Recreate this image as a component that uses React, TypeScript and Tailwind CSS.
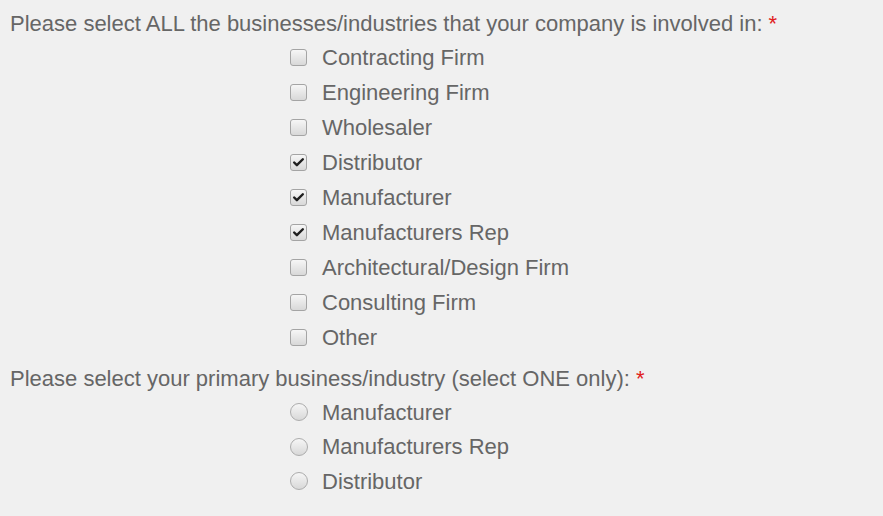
import { Check } from "lucide-react";

const BUSINESSES = [
  { label: "Contracting Firm", checked: false },
  { label: "Engineering Firm", checked: false },
  { label: "Wholesaler", checked: false },
  { label: "Distributor", checked: true },
  { label: "Manufacturer", checked: true },
  { label: "Manufacturers Rep", checked: true },
  { label: "Architectural/Design Firm", checked: false },
  { label: "Consulting Firm", checked: false },
  { label: "Other", checked: false },
];

const PRIMARY = ["Manufacturer", "Manufacturers Rep", "Distributor"];

function Box({ checked }: { checked: boolean }) {
  return (
    <span className="w-[17px] h-[17px] shrink-0 rounded-[3px] border border-[#a4a4a4] bg-gradient-to-b from-[#f6f6f6] to-[#d8d8d8] flex items-center justify-center">
      {checked && <Check size={13} strokeWidth={4.5} className="text-[#1e1e1e]" />}
    </span>
  );
}

function Radio() {
  return (
    <span className="w-[18px] h-[18px] shrink-0 rounded-full border border-[#acacac] bg-gradient-to-b from-[#f6f6f6] to-[#d8d8d8]" />
  );
}

export default function App() {
  return (
    <div className="w-[883px] h-[516px] bg-[#f0f0f0] text-[#666] text-[22px] font-['Liberation_Sans',Arial,sans-serif] px-[10px] pt-[10px]">
      <div className="leading-[28px]">
        Please select ALL the businesses/industries that your company is involved in: <span className="text-[#e02020]">*</span>
      </div>
      <div className="pl-[280px] mt-[2px]">
        {BUSINESSES.map(item => (
          <div key={item.label} className="flex items-center gap-[15px] h-[35px]">
            <Box checked={item.checked} />
            <span>{item.label}</span>
          </div>
        ))}
      </div>
      <div className="leading-[28px] mt-[10px]">
        Please select your primary business/industry (select ONE only): <span className="text-[#e02020]">*</span>
      </div>
      <div className="pl-[280px] mt-[2px]">
        {PRIMARY.map(label => (
          <div key={label} className="flex items-center gap-[14px] h-[34.5px]">
            <Radio />
            <span>{label}</span>
          </div>
        ))}
      </div>
    </div>
  );
}
